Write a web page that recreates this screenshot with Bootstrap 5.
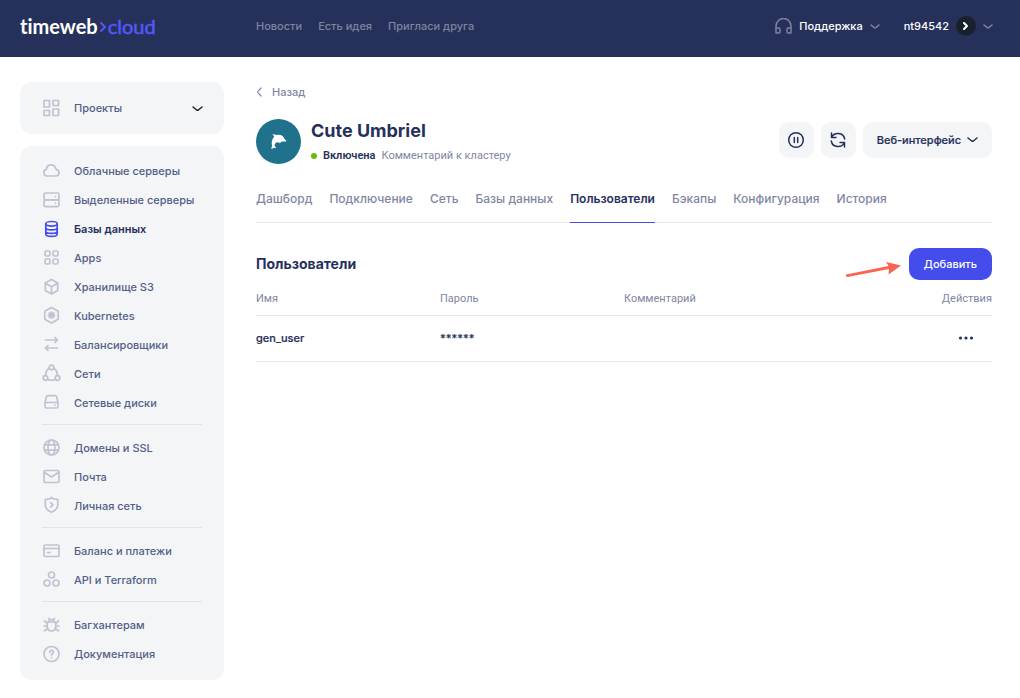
<!DOCTYPE html>
<html lang="ru">
<head>
<meta charset="utf-8">
<meta name="viewport" content="width=device-width, initial-scale=1">
<title>Cute Umbriel — Пользователи</title>
<link href="https://cdn.jsdelivr.net/npm/bootstrap@5.3.0/dist/css/bootstrap.min.css" rel="stylesheet">
<style>
:root{--navy:#26315b;--accent:#444ceb;--muted:#7f86a3;--panel:#f4f5f7;--line:#e5e7eb;--slate:#535f87}
body{font-family:Inter,"Noto Sans",sans-serif;font-size:11px;line-height:16px;color:var(--navy);background:#fff}
a{text-decoration:none;color:inherit}
button{font:inherit;color:inherit}
svg{display:block;flex:none;fill:none;stroke:currentColor;stroke-width:1.5;stroke-linecap:round;stroke-linejoin:round}
.topbar{background:var(--navy);padding:0 27px 5px 20px;min-height:57px}
.brand{font-family:Lato,sans-serif;font-size:20px;line-height:24px;font-weight:700;color:#fff;width:236px;font-variant-ligatures:none}
.brand svg,.brand .cloudword{color:#5558fa}
.brand .cloudword{font-weight:400;-webkit-text-stroke:.5px}
.toplinks{gap:16px;color:#7d849f;font-weight:500}
.plain{background:none;border:0;padding:0}
.topmenu{gap:7px;font-weight:500}
.userchip{width:20px;height:20px;background:#18222c;color:#fff}
.shell{padding:25px 28px 18px 20px;gap:32px}
.side{width:204px;flex:none;gap:12px}
.panel{background:var(--panel);border-radius:12px}
.projects{padding:16px 21px 16px 22px;height:52px;gap:13px;color:var(--slate);font-weight:500;border:0}
.menu{padding:10px 22px 12px}
.menu a{height:29px;gap:13px;color:var(--slate);font-weight:500}
.ico{width:19px;height:19px;color:#bfc3d1;stroke-width:1.7}
.menu a.active{color:var(--navy);font-weight:600}
.menu a.active svg{color:var(--accent)}
.menu hr{margin:7px 0 8px;border-color:#d0d3da;opacity:.5}
.back{gap:8px;color:var(--muted);margin-top:2px;font-weight:500}
.cluster{margin-top:18px}
.avatar{width:45px;height:45px;background:#1f718c;color:#fff;margin-right:10px}
.cluster h1{font-size:18px;line-height:24px;font-weight:700;margin:0 0 5px}
.state{font-family:Roboto,sans-serif;gap:6px}
.dot{width:6px;height:6px;background:#65bd04}
.tools{gap:7px}
.soft{background:var(--panel);border:0;border-radius:10px;height:36px;min-width:35px;padding:0;color:var(--navy)}
.webui{padding:0 14px;font-weight:500;gap:6px;-webkit-text-stroke:.2px}
.tabs{border-bottom:1px solid var(--line);gap:17px;margin-top:27px;font-size:12px}
.tabs a{color:var(--muted);font-weight:500;padding-bottom:15px;margin-bottom:-1px;border-bottom:1px solid transparent}
.tabs a.active{color:var(--navy);font-weight:600;border-bottom-color:var(--accent)}
.section-head{margin-top:25px}
h2{font-size:14px;line-height:20px;font-weight:700;margin:0}
.add{background:var(--accent);color:#fff;border:0;border-radius:10px;height:32px;padding:0 15px;font-weight:500}
.users{table-layout:fixed;margin:0;--bs-table-bg:transparent}
.users th,.users td{padding:0;border-bottom:1px solid var(--line);vertical-align:middle}
.users th{font-family:Roboto,sans-serif;font-weight:400;color:var(--muted);height:35px;padding-top:4px}
.users td{font-weight:500;color:var(--navy);height:46px;-webkit-text-stroke:.2px}
.more{margin-right:18px}
</style>
</head>
<body>
<header class="topbar d-flex align-items-center">
  <a href="#" class="brand d-flex align-items-center"><span>timeweb</span><svg width="10" height="14" viewBox="0 0 10 14" style="stroke-width:2"><path d="M3 4l4 4-4 4"/></svg><span class="cloudword">cloud</span></a>
  <nav class="toplinks d-flex"><a href="#">Новости</a><a href="#">Есть идея</a><a href="#">Пригласи друга</a></nav>
  <div class="ms-auto d-flex align-items-center text-white gap-4">
    <button class="plain topmenu d-flex align-items-center" type="button">
      <svg width="17" height="17" viewBox="0 0 17 17" color="#7d849f"><path d="M1 15V8a7.500 7.500 0 0 1 15 0v7M1 10h2.500a1.500 1.500 0 0 1 1.500 1.500v2A1.500 1.500 0 0 1 3.500 15H1zM16 10h-2.500a1.500 1.500 0 0 0-1.500 1.500v2a1.500 1.500 0 0 0 1.500 1.500H16z"/></svg>
      Поддержка
      <svg width="10" height="8" viewBox="0 0 10 8" color="#7d849f"><path d="M1 3l3.300 2.700q.7.500 1.400 0L9 3"/></svg>
    </button>
    <button class="plain topmenu d-flex align-items-center" type="button">
      nt94542
      <span class="userchip rounded-circle d-flex align-items-center justify-content-center"><svg width="6" height="8" viewBox="0 0 6 8" style="stroke-width:2"><path d="M1 1l3 3-3 3"/></svg></span>
      <svg width="10" height="8" viewBox="0 0 10 8" color="#7d849f"><path d="M1 3l3.300 2.700q.7.500 1.400 0L9 3"/></svg>
    </button>
  </div>
</header>

<div class="shell d-flex align-items-start">
  <aside class="side d-flex flex-column">
    <button class="projects panel d-flex align-items-center" type="button">
      <svg class="ico" viewBox="0 0 19 19"><path d="M2 1.500h5.500v6.500H2zM11 1.500h5.500V6.500H11zM2 11.500h5.500v5H2zM11 10h5.500v6.500H11z"/></svg>
      Проекты
      <svg class="ms-auto" width="11" height="7" viewBox="0 0 11 7" color="#222"><path d="M1 2l3.700 3q.8.500 1.600 0L10 2"/></svg>
    </button>
    <nav class="menu panel">
      <a href="#" class="d-flex align-items-center"><svg class="ico" viewBox="0 0 19 19"><path d="M5 15a3.400 3.400 0 0 1-.6-6.700C5.200 2.500 12.700 2.500 14 8.300a3.400 3.400 0 0 1 .3 6.700z"/></svg>Облачные серверы</a>
      <a href="#" class="d-flex align-items-center"><svg class="ico" viewBox="0 0 19 19"><rect x="2" y="3" width="15" height="6.800" rx="1.500"/><rect x="2" y="9.800" width="15" height="6.800" rx="1.500"/><path d="M13.500 6.500v.1M13.500 13.200v.1"/></svg>Выделенные серверы</a>
      <a href="#" class="active d-flex align-items-center"><svg class="ico" viewBox="0 0 19 19"><ellipse cx="9.500" cy="4.800" rx="5.700" ry="2.300"/><path d="M3.800 5v10c0 3.200 11.400 3.200 11.400 0V5M3.800 8.500c0 3.200 11.400 3.200 11.400 0M3.800 12c0 3.200 11.400 3.200 11.400 0"/></svg>Базы данных</a>
      <a href="#" class="d-flex align-items-center"><svg class="ico" viewBox="0 0 19 19"><rect x="3" y="3" width="5" height="5" rx="1.500"/><rect x="11" y="3" width="5" height="5" rx="1.500"/><rect x="3" y="11" width="5" height="5" rx="1.500"/><rect x="11" y="11" width="5" height="5" rx="1.500"/></svg>Apps</a>
      <a href="#" class="d-flex align-items-center"><svg class="ico" viewBox="0 0 19 19"><path d="M9.500 2.500l6.200 3.500v7.400l-6.200 3.500-6.200-3.500V6zM3.500 6.200l6 3.500 6-3.500M9.500 9.700v7"/></svg>Хранилище S3</a>
      <a href="#" class="d-flex align-items-center"><svg class="ico" viewBox="0 0 19 19"><path d="M9.500 1.500l6.700 3.700v8l-6.700 3.700-6.700-3.700v-8z"/><path fill="currentColor" stroke-width=".6" d="M9.500 5.200l1 1.700 1.800-.4-.4 1.700 1.500 1-1.500 1 .4 1.800-1.800-.4-1 1.500-1-1.500-1.800.400.400-1.800-1.500-1 1.500-1-.4-1.700 1.800.4z"/></svg>Kubernetes</a>
      <a href="#" class="d-flex align-items-center"><svg class="ico" viewBox="0 0 19 19"><path d="M3.500 5h12M13 2.500L15.500 5 13 7.500M15.500 13h-12M6 10.500L3.500 13 6 15.500"/></svg>Балансировщики</a>
      <a href="#" class="d-flex align-items-center"><svg class="ico" viewBox="0 0 19 19"><circle cx="9.500" cy="3.500" r="2.300"/><circle cx="3.500" cy="14" r="2.300"/><circle cx="15.500" cy="14" r="2.300"/><path d="M7.300 4.300C4.800 5.700 3.700 8.300 3.600 11.600M11.700 4.300c2.500 1.400 3.600 4 3.700 7.300M5.700 15.200c2.500 1.400 5.100 1.400 7.600 0"/></svg>Сети</a>
      <a href="#" class="d-flex align-items-center"><svg class="ico" viewBox="0 0 19 19"><path d="M3 9.500l1.300-5.500A1.800 1.800 0 0 1 6 2.700h7A1.800 1.800 0 0 1 14.700 4L16 9.500v4a1.500 1.500 0 0 1-1.500 1.500h-10A1.500 1.500 0 0 1 3 13.500zM3 9.500h13M13 12.100v.1"/></svg>Сетевые диски</a>
      <hr>
      <a href="#" class="d-flex align-items-center"><svg class="ico" viewBox="0 0 19 19"><circle cx="9.500" cy="9.500" r="7.500"/><ellipse cx="9.500" cy="9.500" rx="3.500" ry="7.500"/><path d="M2.700 6.800h13.600M2.700 12.200h13.600"/></svg>Домены и SSL</a>
      <a href="#" class="d-flex align-items-center"><svg class="ico" viewBox="0 0 19 19"><rect x="2" y="3.500" width="15" height="12" rx="1.500"/><path d="M2.500 5.500l7 4.500 7-4.500"/></svg>Почта</a>
      <a href="#" class="d-flex align-items-center"><svg class="ico" viewBox="0 0 19 19"><path d="M9.500 1.500L11 2.700l4.700.8v6c0 3-2.700 5.200-6.200 6.800-3.500-1.600-6.200-3.800-6.200-6.800v-6L8 2.700zM8.700 6.700L10.900 8.900l-2.200 2.200"/></svg>Личная сеть</a>
      <hr>
      <a href="#" class="d-flex align-items-center"><svg class="ico" viewBox="0 0 19 19"><rect x="2" y="4" width="15" height="11.500" rx="1.200"/><path d="M2 7.500h15M5.500 11.500H8"/></svg>Баланс и платежи</a>
      <a href="#" class="d-flex align-items-center"><svg class="ico" viewBox="0 0 19 19"><circle cx="9.500" cy="5" r="3"/><circle cx="5" cy="13" r="3"/><circle cx="14" cy="13" r="3"/></svg>API и Terraform</a>
      <hr>
      <a href="#" class="d-flex align-items-center"><svg class="ico" viewBox="0 0 19 19"><path d="M5.700 7h7.600c1.300 4 .6 9-3.800 9s-5.100-5-3.800-9zM7 6.800c0-3 5-3 5 0M7.500 4.500L6.700 3.500M11.500 4.500l.8-1M5.500 8.500L2.500 6M13.500 8.500l3-2.500M5.300 11H2M13.700 11H17M5.800 13.500l-3.300 2.300M13.200 13.500l3.300 2.300"/></svg>Багхантерам</a>
      <a href="#" class="d-flex align-items-center"><svg class="ico" viewBox="0 0 19 19"><circle cx="9.500" cy="10" r="7.500"/><path d="M7.700 8.200c0-2.400 3.800-2.200 3.700 0 0 1.400-1.900 1.300-1.900 2.800M9.500 13.500v.1"/></svg>Документация</a>
    </nav>
  </aside>

  <main class="flex-fill">
    <a href="#" class="back d-inline-flex align-items-center"><svg width="8" height="10" viewBox="0 0 8 10" style="stroke-width:1.2"><path d="M5 1L1.900 4.300q-.5.700 0 1.400L5 9"/></svg>Назад</a>
    <div class="cluster d-flex align-items-center">
      <div class="avatar rounded-circle d-flex align-items-center justify-content-center">
        <svg width="17" height="17" viewBox="0 0 17 17" style="fill:currentColor;stroke:none"><path d="M2.500 1l4 .9c3.800-.8 6.900.6 8 4.100l1.800 1.700-.2.900-3.600 0-1.500.4-1.200 1.500-.8-1.500-1 1.100-.8-1.100C5.500 9.700 4.500 11 4.600 12.600L6.300 15.200l-2.300-.5L1.300 16.300l.7-3.500C1.200 9.300 1.900 6.300 4.200 3.700z"/></svg>
      </div>
      <div>
        <h1>Cute Umbriel</h1>
        <div class="state d-flex align-items-center"><span class="dot rounded-circle"></span><span class="fw-semibold">Включена</span><span style="color:var(--muted)">Комментарий к кластеру</span></div>
      </div>
      <div class="tools ms-auto mb-1 d-flex">
        <button class="soft d-flex align-items-center justify-content-center" type="button" aria-label="Пауза"><svg width="18" height="18" viewBox="0 0 18 18"><circle cx="9" cy="9" r="7.300"/><path d="M7.300 6.500v5M10.700 6.500v5"/></svg></button>
        <button class="soft d-flex align-items-center justify-content-center" type="button" aria-label="Перезагрузить"><svg width="18" height="18" viewBox="0 0 18 18"><path d="M2.500 2v4.500H7L2.500 6.500M2.500 6.500C5 .8 14.500 1 15.700 8M15.500 16v-4.500H11h4.500M15.500 11.500C13 17.200 3.500 17 2.300 10"/></svg></button>
        <button class="soft webui d-flex align-items-center" type="button">Веб-интерфейс<svg width="11" height="7" viewBox="0 0 11 7"><path d="M1 2l3.700 3q.8.500 1.600 0L10 2"/></svg></button>
      </div>
    </div>
    <nav class="tabs d-flex">
      <a href="#">Дашборд</a><a href="#">Подключение</a><a href="#">Сеть</a><a href="#">Базы данных</a><a href="#" class="active">Пользователи</a><a href="#">Бэкапы</a><a href="#">Конфигурация</a><a href="#">История</a>
    </nav>
    <div class="section-head d-flex align-items-center">
      <h2>Пользователи</h2>
      <svg class="ms-auto me-2" width="56" height="32" viewBox="0 0 56 32" color="#fa6450" style="stroke:none;fill:currentColor"><path d="M1 26.500q-.5 2.500 1.500 2.500L44 21l-.5 5.500L56 17.500 41 14l2.500 4z"/></svg>
      <button class="add" type="button">Добавить</button>
    </div>
    <table class="users table">
      <thead><tr><th>Имя</th><th>Пароль</th><th>Комментарий</th><th class="text-end">Действия</th></tr></thead>
      <tbody><tr><td>gen_user</td><td>******</td><td></td><td><button class="plain more d-block ms-auto" type="button" aria-label="Действия"><svg width="16" height="4" viewBox="0 0 16 4" style="fill:currentColor;stroke:none"><circle cx="2.500" cy="2" r="1.600"/><circle cx="8" cy="2" r="1.600"/><circle cx="13.500" cy="2" r="1.600"/></svg></button></td></tr></tbody>
    </table>
  </main>
</div>
<script src="https://cdn.jsdelivr.net/npm/bootstrap@5.3.0/dist/js/bootstrap.bundle.min.js"></script>
</body>
</html>
